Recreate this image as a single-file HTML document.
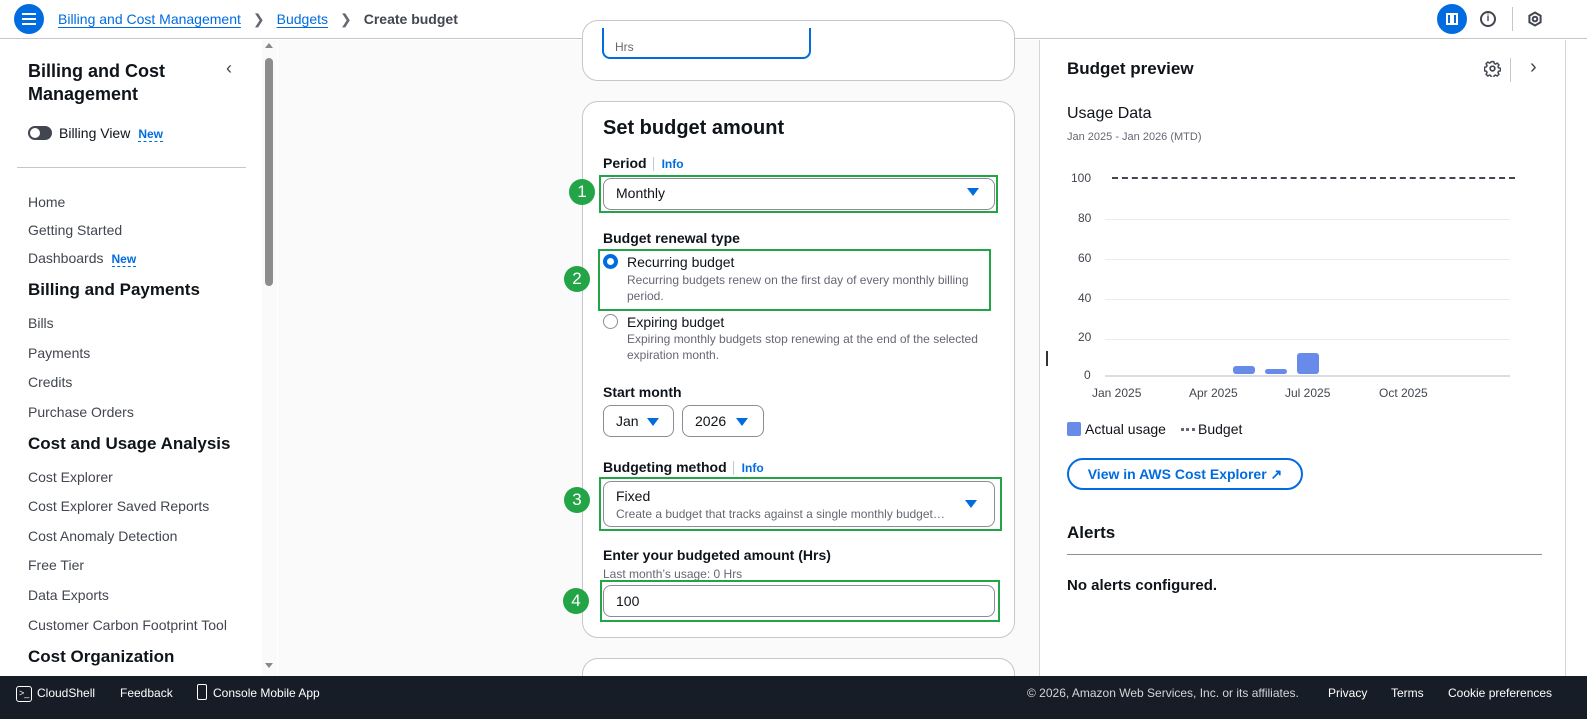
<!DOCTYPE html>
<html><head><meta charset="utf-8"><style>
*{box-sizing:border-box;margin:0;padding:0}
body{width:1587px;height:719px;overflow:hidden;font-family:"Liberation Sans",sans-serif;color:#0f141a;background:#fff;position:relative;font-size:14px}
.a{position:absolute}
.top{left:0;top:0;width:1587px;height:39px;border-bottom:1px solid #c6c6cd;background:#fff}
.lnk{color:#006ce0;text-decoration:underline;text-underline-offset:3px}
.side{left:0;top:40px;width:277px;height:636px;border-right:1px solid #d5d5d9;background:#fff}
.nav{position:absolute;left:28px;color:#424650;font-size:14px}
.navh{position:absolute;left:28px;font-weight:bold;font-size:17px;color:#0f141a}
.new{color:#006ce0;font-weight:bold;font-size:12px;border-bottom:1px dashed #006ce0;margin-left:8px}
.main{left:278px;top:40px;width:761px;height:636px;background:#fafafa}
.card{position:absolute;left:582px;width:433px;background:#fff;border:1px solid #c6c6cd;border-radius:16px}
.lbl{position:absolute;left:603px;font-weight:bold;font-size:14px}
.info{color:#006ce0;font-size:12px;font-weight:bold;border-left:1px solid #c6c6cd;padding-left:8px;margin-left:6px}
.sel{position:absolute;border:1px solid #8c8c94;border-radius:8px;background:#fff}
.tri{position:absolute;width:0;height:0;border-left:6px solid transparent;border-right:6px solid transparent;border-top:8px solid #006ce0}
.gb{position:absolute;border:2px solid #22a447}
.num{position:absolute;width:26px;height:26px;border-radius:50%;background:#22a447;color:#fff;font-size:17px;text-align:center;line-height:26px}
.desc{color:#656871;font-size:12px;line-height:16px}
.right{left:1039px;top:40px;width:548px;height:636px;background:#fff;border-left:1px solid #d5d5d9}
.foot{left:0;top:676px;width:1587px;height:43px;background:#161d26;color:#fff;font-size:12px}
.ax{position:absolute;font-size:12px;color:#424650}
.grid{position:absolute;left:1105px;width:405px;height:1px;background:#e9ebed}
</style></head><body>
<div class="a top">
  <div class="a" style="left:14px;top:4px;width:30px;height:30px;border-radius:50%;background:#006ce0">
    <div class="a" style="left:8px;top:9px;width:14px;height:2px;background:#fff"></div>
    <div class="a" style="left:8px;top:14px;width:14px;height:2px;background:#fff"></div>
    <div class="a" style="left:8px;top:19px;width:14px;height:2px;background:#fff"></div>
  </div>
  <div class="a" style="left:58px;top:11px;font-size:14px;white-space:nowrap"><span class="lnk">Billing and Cost Management</span><span style="color:#656871;margin:0 12px">&#x276F;</span><span class="lnk">Budgets</span><span style="color:#656871;margin:0 12px">&#x276F;</span><span style="color:#424650;font-weight:bold">Create budget</span></div>
  <div class="a" style="left:1437px;top:4px;width:30px;height:30px;border-radius:50%;background:#006ce0"><div class="a" style="left:9px;top:9px;width:12px;height:12px;border:2px solid #fff"><div class="a" style="left:2px;top:0;width:4px;height:8px;background:#fff"></div></div></div>
  <div class="a" style="left:1480px;top:11px;width:16px;height:16px;border:2px solid #424650;border-radius:50%;font-size:10px;font-weight:bold;text-align:center;line-height:12px;color:#424650">i</div>
  <div class="a" style="left:1512px;top:7px;width:1px;height:24px;background:#c6c6cd"></div>
  <svg class="a" style="left:1527px;top:11px" width="16" height="16" viewBox="0 0 16 16"><path d="M8 1.5 L13.6 4.75 V11.25 L8 14.5 L2.4 11.25 V4.75 Z" fill="none" stroke="#424650" stroke-width="2"/><circle cx="8" cy="8" r="2.3" fill="none" stroke="#424650" stroke-width="2"/></svg>
</div>
<div class="a side">
  <div class="navh" style="top:20px;font-size:18px;line-height:23px">Billing and Cost<br>Management</div>
  <div class="a" style="left:226px;top:18px;font-size:18px;color:#424650">&#x2039;</div>
  <div class="a" style="left:28px;top:86px;width:24px;height:14px;border-radius:7px;background:#424650"><div class="a" style="left:2px;top:2px;width:10px;height:10px;border-radius:50%;background:#fff"></div></div>
  <div class="a" style="left:59px;top:85px;font-size:14px;color:#0f141a">Billing View<span class="new">New</span></div>
  <div class="a" style="left:17px;top:127px;width:229px;height:1px;background:#c6c6cd"></div>
  <div class="nav" style="top:154px">Home</div>
  <div class="nav" style="top:182px">Getting Started</div>
  <div class="nav" style="top:210px">Dashboards<span class="new">New</span></div>
  <div class="navh" style="top:240px">Billing and Payments</div>
  <div class="nav" style="top:275px">Bills</div>
  <div class="nav" style="top:305px">Payments</div>
  <div class="nav" style="top:334px">Credits</div>
  <div class="nav" style="top:364px">Purchase Orders</div>
  <div class="navh" style="top:394px">Cost and Usage Analysis</div>
  <div class="nav" style="top:429px">Cost Explorer</div>
  <div class="nav" style="top:458px">Cost Explorer Saved Reports</div>
  <div class="nav" style="top:488px">Cost Anomaly Detection</div>
  <div class="nav" style="top:517px">Free Tier</div>
  <div class="nav" style="top:547px">Data Exports</div>
  <div class="nav" style="top:577px">Customer Carbon Footprint Tool</div>
  <div class="navh" style="top:607px">Cost Organization</div>
  <div class="a" style="left:262px;top:0;width:15px;height:636px;background:#fafafa"></div>
  <div class="a" style="left:265px;top:3px;width:0;height:0;border-left:4px solid transparent;border-right:4px solid transparent;border-bottom:5px solid #888"></div>
  <div class="a" style="left:265px;top:18px;width:8px;height:228px;border-radius:4px;background:#8d8d8d"></div>
  <div class="a" style="left:265px;top:623px;width:0;height:0;border-left:4px solid transparent;border-right:4px solid transparent;border-top:5px solid #888"></div>
</div>
<div class="a main"></div>
<div class="card" style="top:20px;height:61px"></div>
<div class="sel" style="left:602px;top:28px;width:209px;height:31px;border:2px solid #006ce0;border-top:none;border-radius:0 0 8px 8px"></div>
<div class="a desc" style="left:615px;top:39px">Hrs</div>
<div class="card" style="top:101px;height:537px"></div>
<div class="a" style="left:603px;top:117px;font-size:20px;font-weight:bold">Set budget amount</div>
<div class="lbl" style="top:155px">Period<span class="info">Info</span></div>
<div class="gb" style="left:599px;top:175px;width:399px;height:38px"></div>
<div class="num" style="left:569px;top:179px">1</div>
<div class="sel" style="left:603px;top:178px;width:392px;height:32px"></div>
<div class="a" style="left:616px;top:185px">Monthly</div>
<div class="tri" style="left:967px;top:188px"></div>
<div class="lbl" style="top:230px">Budget renewal type</div>
<div class="gb" style="left:598px;top:249px;width:393px;height:62px"></div>
<div class="num" style="left:564px;top:266px">2</div>
<div class="a" style="left:603px;top:254px;width:15px;height:15px;border-radius:50%;border:4px solid #006ce0;background:#fff"></div>
<div class="a" style="left:627px;top:254px">Recurring budget</div>
<div class="a desc" style="left:627px;top:272px">Recurring budgets renew on the first day of every monthly billing<br>period.</div>
<div class="a" style="left:603px;top:314px;width:15px;height:15px;border-radius:50%;border:1.5px solid #8c8c94"></div>
<div class="a" style="left:627px;top:314px">Expiring budget</div>
<div class="a desc" style="left:627px;top:331px">Expiring monthly budgets stop renewing at the end of the selected<br>expiration month.</div>
<div class="lbl" style="top:384px">Start month</div>
<div class="sel" style="left:603px;top:405px;width:71px;height:32px"></div>
<div class="a" style="left:616px;top:413px">Jan</div>
<div class="tri" style="left:647px;top:418px"></div>
<div class="sel" style="left:682px;top:405px;width:82px;height:32px"></div>
<div class="a" style="left:695px;top:413px">2026</div>
<div class="tri" style="left:736px;top:418px"></div>
<div class="lbl" style="top:459px">Budgeting method<span class="info">Info</span></div>
<div class="gb" style="left:599px;top:477px;width:403px;height:54px"></div>
<div class="num" style="left:564px;top:487px">3</div>
<div class="sel" style="left:603px;top:481px;width:392px;height:46px"></div>
<div class="a" style="left:616px;top:488px">Fixed</div>
<div class="a desc" style="left:616px;top:506px">Create a budget that tracks against a single monthly budget…</div>
<div class="tri" style="left:965px;top:500px"></div>
<div class="lbl" style="top:547px">Enter your budgeted amount (Hrs)</div>
<div class="a desc" style="left:603px;top:566px;color:#656871">Last month’s usage: 0 Hrs</div>
<div class="gb" style="left:600px;top:580px;width:400px;height:42px"></div>
<div class="num" style="left:563px;top:588px">4</div>
<div class="sel" style="left:603px;top:585px;width:392px;height:32px"></div>
<div class="a" style="left:616px;top:593px">100</div>
<div class="card" style="top:658px;height:40px"></div>
<div class="a right">
  <div class="a" style="left:27px;top:19px;font-size:17px;font-weight:bold">Budget preview</div>
  <svg class="a" style="left:444px;top:20px" width="17" height="17" viewBox="0 0 16 16"><circle cx="8" cy="8" r="2.2" fill="none" stroke="#424650" stroke-width="1.6"/><path d="M6.8 1.5h2.4l.4 1.8 1.2.6 1.6-1 1.7 1.7-1 1.6.6 1.2 1.8.4v2.4l-1.8.4-.6 1.2 1 1.6-1.7 1.7-1.6-1-1.2.6-.4 1.8H6.8l-.4-1.8-1.2-.6-1.6 1-1.7-1.7 1-1.6-.6-1.2-1.8-.4V6.8l1.8-.4.6-1.2-1-1.6 1.7-1.7 1.6 1 1.2-.6z" fill="none" stroke="#424650" stroke-width="1.4" stroke-linejoin="round"/></svg>
  <div class="a" style="left:470px;top:18px;width:1px;height:24px;background:#c6c6cd"></div>
  <div class="a" style="left:490px;top:16px;font-size:20px;color:#424650">&#x203A;</div>
  <div class="a" style="left:27px;top:65px;font-size:16px">Usage Data</div>
  <div class="a" style="left:27px;top:91px;font-size:11px;color:#656871">Jan 2025 - Jan 2026 (MTD)</div>
  <div class="a" style="left:6px;top:311px;width:2px;height:15px;background:#333"></div>
  <div class="a" style="left:525px;top:0;width:1px;height:636px;background:#d5d5d9"></div>
</div>
<div class="ax" style="left:1071px;top:171px">100</div>
<div class="ax" style="left:1078px;top:211px">80</div>
<div class="ax" style="left:1078px;top:251px">60</div>
<div class="ax" style="left:1078px;top:291px">40</div>
<div class="ax" style="left:1078px;top:330px">20</div>
<div class="ax" style="left:1084px;top:368px">0</div>
<div class="a" style="left:1112px;top:177px;width:403px;border-top:2px dashed #424650"></div>
<div class="grid" style="top:219px"></div>
<div class="grid" style="top:259px"></div>
<div class="grid" style="top:299px"></div>
<div class="grid" style="top:339px"></div>
<div class="a" style="left:1105px;top:375px;width:405px;height:2px;background:#dcdde0"></div>
<div class="a" style="left:1233px;top:366px;width:22px;height:8px;border-radius:3px;background:#688ae8"></div>
<div class="a" style="left:1265px;top:369px;width:22px;height:5px;border-radius:3px;background:#688ae8"></div>
<div class="a" style="left:1297px;top:353px;width:22px;height:21px;border-radius:3px;background:#688ae8"></div>
<div class="ax" style="left:1092px;top:386px">Jan 2025</div>
<div class="ax" style="left:1189px;top:386px">Apr 2025</div>
<div class="ax" style="left:1285px;top:386px">Jul 2025</div>
<div class="ax" style="left:1379px;top:386px">Oct 2025</div>
<div class="a" style="left:1067px;top:422px;width:14px;height:14px;border-radius:2px;background:#688ae8"></div>
<div class="a" style="left:1085px;top:421px">Actual usage</div>
<div class="a" style="left:1181px;top:428px;width:14px;border-top:3px dotted #656871"></div>
<div class="a" style="left:1198px;top:421px">Budget</div>
<div class="a" style="left:1067px;top:458px;width:236px;height:32px;border:2px solid #006ce0;border-radius:16px;color:#006ce0;font-weight:bold;text-align:center;line-height:28px">View in AWS Cost Explorer ↗</div>
<div class="a" style="left:1067px;top:523px;font-size:17px;font-weight:bold">Alerts</div>
<div class="a" style="left:1067px;top:554px;width:475px;height:1px;background:#8c8c94"></div>
<div class="a" style="left:1067px;top:577px;font-size:15px;font-weight:bold">No alerts configured.</div>
<div class="a foot">
  <div class="a" style="left:16px;top:10px;width:16px;height:16px;border:1.5px solid #fff;border-radius:3px;font-size:9px;line-height:12px;padding-left:2px">&gt;_</div>
  <div class="a" style="left:37px;top:10px">CloudShell</div>
  <div class="a" style="left:120px;top:10px">Feedback</div>
  <div class="a" style="left:197px;top:8px;width:10px;height:16px;border:1.5px solid #fff;border-radius:2px"></div>
  <div class="a" style="left:213px;top:10px">Console Mobile App</div>
  <div class="a" style="left:1027px;top:10px;color:#d5d5d9">© 2026, Amazon Web Services, Inc. or its affiliates.</div>
  <div class="a" style="left:1328px;top:10px">Privacy</div>
  <div class="a" style="left:1391px;top:10px">Terms</div>
  <div class="a" style="left:1448px;top:10px">Cookie preferences</div>
</div>
</body></html>
